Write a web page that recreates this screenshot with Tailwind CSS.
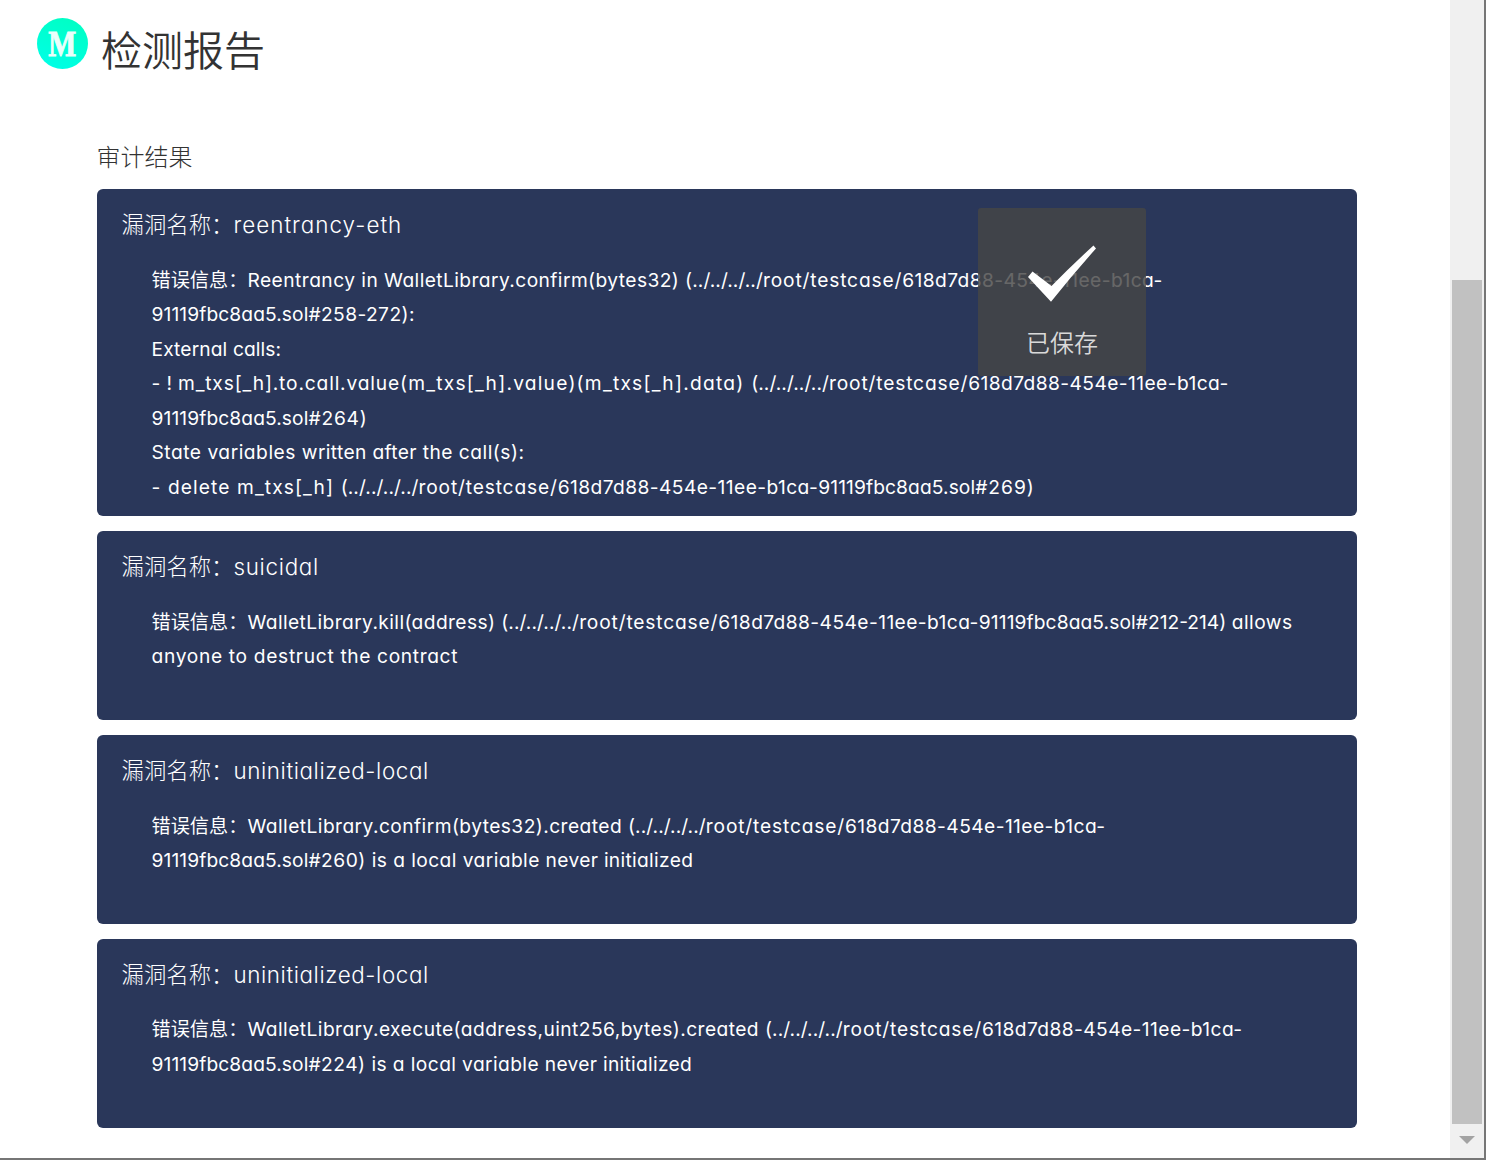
<!DOCTYPE html>
<html lang="zh-CN">
<head>
<meta charset="utf-8">
<title>检测报告</title>
<script src="https://cdn.jsdelivr.net/npm/@tailwindcss/browser@4"></script>
</head>
<body class="relative flex h-[1160px] overflow-hidden border-r-2 border-b-2 border-[#767676] bg-white font-['Inter','Noto_Sans_CJK_SC',sans-serif] text-[#333] [font-feature-settings:'cv11']">
<main class="w-[1450px] shrink-0">
  <header class="flex pl-[37px] pt-[18px]">
    <svg class="size-[51px]" viewBox="0 0 51 51">
      <defs><linearGradient id="g" x1="0.7" y1="0" x2="0.3" y2="1"><stop offset="0" stop-color="#00ffc4"/><stop offset="1" stop-color="#00ffe6"/></linearGradient></defs>
      <circle cx="25.5" cy="25.5" r="25.5" fill="url(#g)"/>
      <text x="25.3" y="37.7" text-anchor="middle" textLength="28" lengthAdjust="spacingAndGlyphs" font-family="Liberation Serif, serif" font-weight="bold" font-size="35" fill="#eafffb" stroke="#eafffb" stroke-width=".8">M</text>
    </svg>
    <h1 class="ml-[13px] mt-[2px] text-[41px] leading-[62px] font-[350]">检测报告</h1>
  </header>
  <h2 class="mt-[58px] ml-[96.5px] text-[24px] leading-[36px] font-light">审计结果</h2>
  <section class="mt-[13px] ml-[97px] flex w-[1260px] flex-col gap-[15px] text-[19.2px] leading-[34.56px] text-white [&_p]:whitespace-pre">
    <article class="h-[327px] rounded-md bg-[#2a375a] pl-[24.5px] pt-[19px]">
      <h3 class="flex h-[34px] items-center text-[22.4px] font-light">漏洞名称：<span class="tracking-[1.03px]">reentrancy-eth</span></h3>
      <div class="mt-[20.5px] pl-[30px]">
        <p>错误信息：<span class="tracking-[.46px]">Reentrancy in </span><span class="tracking-[.42px]">WalletLibrary.confirm(bytes32) </span><span class="tracking-[.1px]">(../../../../</span><span class="tracking-[.83px]">root/testcase/</span><span class="tracking-[.42px]">618d7d88-454e-11ee-b1ca-</span></p>
        <p><span class="tracking-[.1px]">91119fbc8aa5.sol</span><span class="tracking-[.4px]">#258-272):</span></p>
        <p class="tracking-[.12px]">External calls:</p>
        <p><span class="tracking-[.34px]">- ! </span><span class="tracking-[.84px]">m_txs[_h].to.call.value</span><span class="tracking-[1.22px]">(m_txs[_h].value)</span><span class="tracking-[1.24px]">(m_txs[_h].data) </span><span class="tracking-[.1px]">(../../../../</span><span class="tracking-[.83px]">root/testcase/</span><span class="tracking-[.42px]">618d7d88-454e-11ee-b1ca-</span></p>
        <p><span class="tracking-[.1px]">91119fbc8aa5.sol</span><span class="tracking-[.8px]">#264)</span></p>
        <p><span class="tracking-[.52px]">State variables </span><span class="tracking-[.36px]">written after </span><span class="tracking-[.5px]">the call(s):</span></p>
        <p><span class="tracking-[1.1px]">- delete m_txs[_h] </span><span class="tracking-[.1px]">(../../../../</span><span class="tracking-[.83px]">root/testcase/</span><span class="tracking-[.42px]">618d7d88-454e-11ee-b1ca-</span><span class="tracking-[.1px]">91119fbc8aa5.sol</span><span class="tracking-[.97px]">#269)</span></p>
      </div>
    </article>
    <article class="h-[189px] rounded-md bg-[#2a375a] pl-[24.5px] pt-[19px]">
      <h3 class="flex h-[34px] items-center text-[22.4px] font-light">漏洞名称：<span class="tracking-[.7px]">suicidal</span></h3>
      <div class="mt-[20.5px] pl-[30px]">
        <p>错误信息：<span class="tracking-[.4px]">WalletLibrary.kill(address) </span><span class="tracking-[.1px]">(../../../../</span><span class="tracking-[.83px]">root/testcase/</span><span class="tracking-[.42px]">618d7d88-454e-11ee-b1ca-</span><span class="tracking-[.1px]">91119fbc8aa5.sol</span><span>#212-214) </span><span class="tracking-[.5px]">allows</span></p>
        <p><span class="tracking-[.67px]">anyone to destruct </span><span class="tracking-[.62px]">the contract</span></p>
      </div>
    </article>
    <article class="h-[189px] rounded-md bg-[#2a375a] pl-[24.5px] pt-[19px]">
      <h3 class="flex h-[34px] items-center text-[22.4px] font-light">漏洞名称：<span class="tracking-[.6px]">uninitialized-local</span></h3>
      <div class="mt-[20.5px] pl-[30px]">
        <p>错误信息：<span class="tracking-[.44px]">WalletLibrary.confirm(bytes32).created </span><span class="tracking-[.1px]">(../../../../</span><span class="tracking-[.83px]">root/testcase/</span><span class="tracking-[.42px]">618d7d88-454e-11ee-b1ca-</span></p>
        <p><span class="tracking-[.1px]">91119fbc8aa5.sol</span><span class="tracking-[.5px]">#260) </span><span class="tracking-[.43px]">is a local variable </span><span class="tracking-[.32px]">never initialized</span></p>
      </div>
    </article>
    <article class="h-[189px] rounded-md bg-[#2a375a] pl-[24.5px] pt-[19px]">
      <h3 class="flex h-[34px] items-center text-[22.4px] font-light">漏洞名称：<span class="tracking-[.6px]">uninitialized-local</span></h3>
      <div class="mt-[20px] pl-[30px]">
        <p>错误信息：<span class="tracking-[.44px]">WalletLibrary.execute(address,uint256,bytes).created </span><span class="tracking-[.1px]">(../../../../</span><span class="tracking-[.83px]">root/testcase/</span><span class="tracking-[.42px]">618d7d88-454e-11ee-b1ca-</span></p>
        <p><span class="tracking-[.1px]">91119fbc8aa5.sol</span><span class="tracking-[.5px]">#224) </span><span class="tracking-[.4px]">is a local variable </span><span class="tracking-[.3px]">never initialized</span></p>
      </div>
    </article>
  </section>
</main>
<!-- scrollbar -->
<aside class="flex w-[34px] shrink-0 flex-col items-center bg-[#f0f0f0] pt-[280px]">
  <div class="h-[844px] w-[30px] bg-[#c1c1c1]"></div>
  <svg class="mt-[12px] h-[8px] w-[16px]" viewBox="0 0 16 8"><path d="M0 0h16L8 8z" fill="#a3a3a3"/></svg>
</aside>
<!-- saved toast -->
<div class="absolute top-[208px] left-[978px] flex size-[168px] flex-col items-center rounded-[3px] bg-[#454545]/82 pt-[37px]">
  <svg class="h-[57px] w-[68px]" viewBox="0 0 68 57"><path d="M0 32 4.5 26.5 23.5 41Q43 21 65.5.5L68 3.5Q46 28 23 56.7Z" fill="#fff"/></svg>
  <p class="mt-[24px] text-[24px] leading-[36px] font-[350] text-[#d9d9d9]">已保存</p>
</div>
</body>
</html>
